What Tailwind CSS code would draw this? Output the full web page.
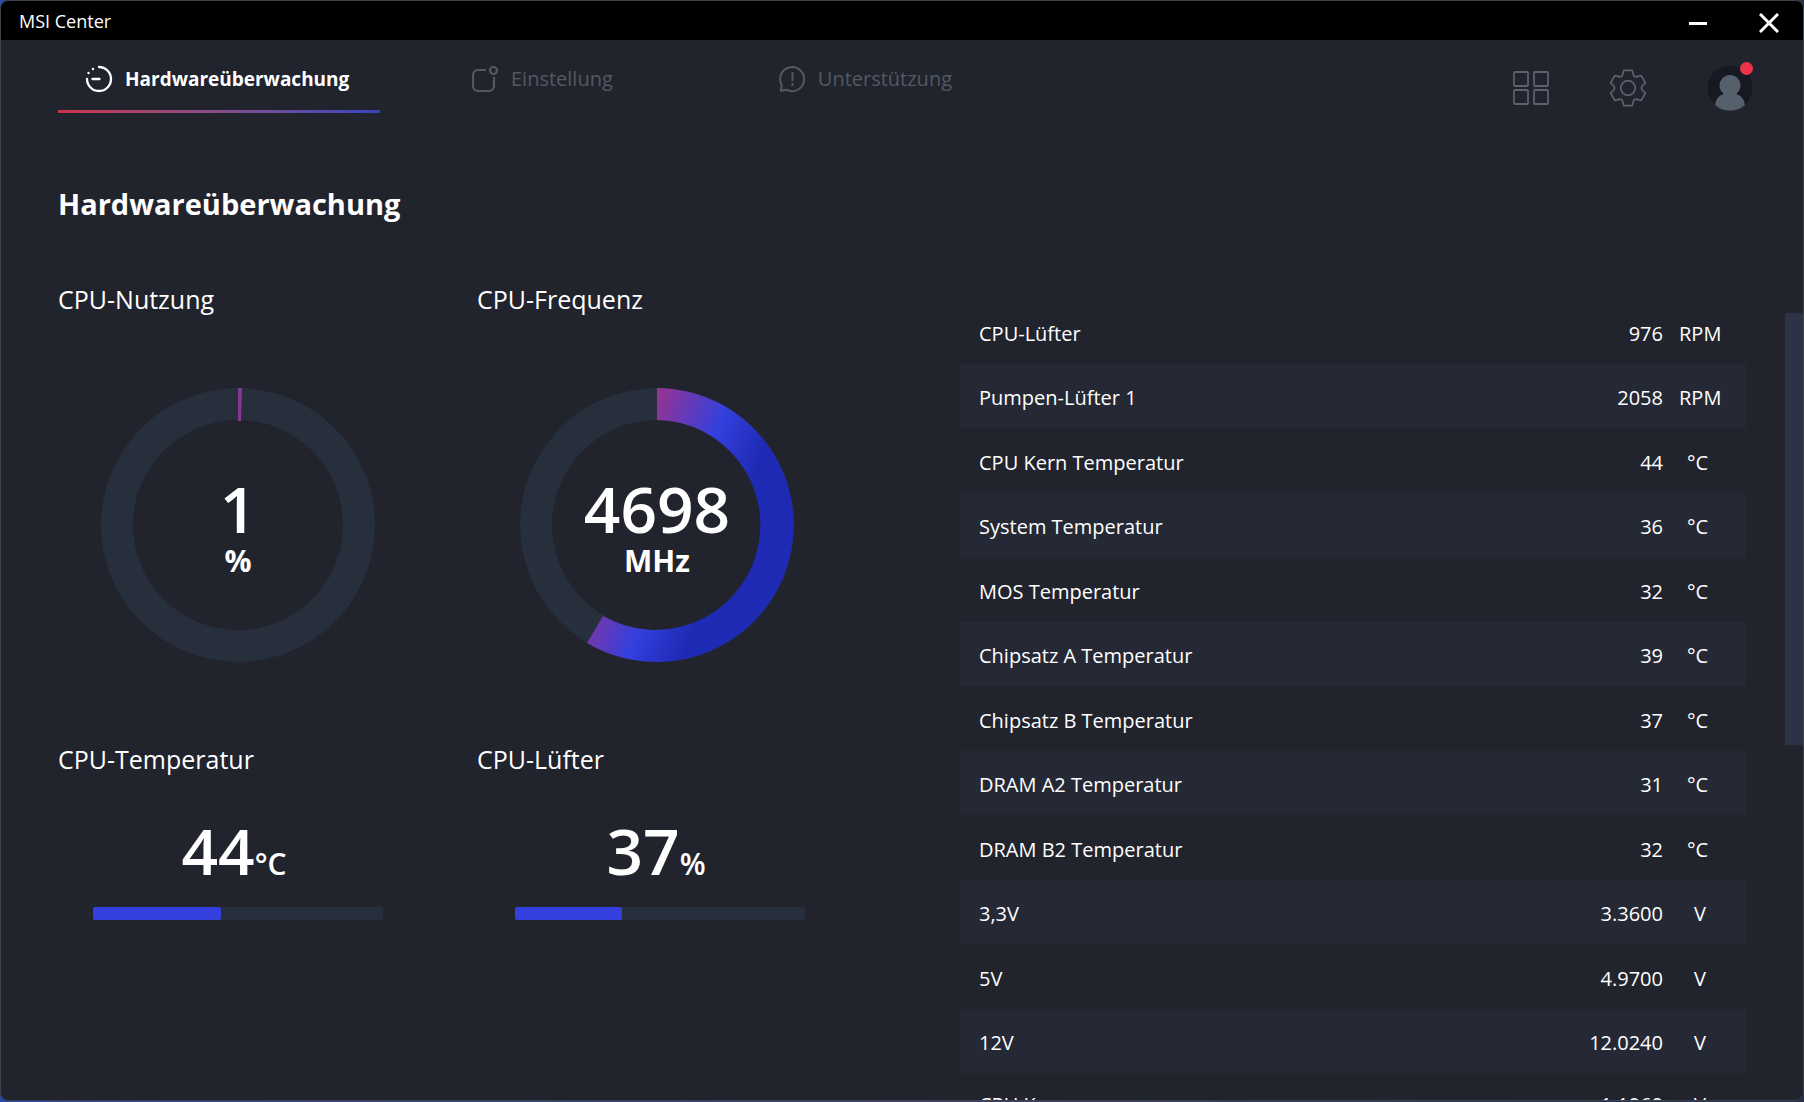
<!DOCTYPE html>
<html lang="de">
<head>
  <meta charset="UTF-8">
  <meta name="viewport" content="width=device-width, initial-scale=1.0">
  <title>MSI Center</title>
  <script src="https://cdn.jsdelivr.net/npm/@tailwindcss/browser@4"></script>
</head>
<body class="h-screen overflow-hidden bg-linear-to-r from-[#2c49a8] via-[#3f3f6d] to-[#262e48] pb-px font-['Open_Sans','Noto_Sans',sans-serif] text-white">
  <div class="flex h-full flex-col overflow-hidden rounded-lg border border-[#3a424c] bg-[#21242d]">

    <!-- Title bar -->
    <header class="flex h-[39px] shrink-0 items-center justify-between bg-black pr-6 pl-[18px]">
      <span class="text-lg">MSI Center</span>
      <div class="flex items-center gap-[50px] pt-1">
        <button type="button" aria-label="Minimieren">
          <svg class="h-5 w-5" viewBox="0 0 20 20" stroke="currentColor" stroke-width="3"><path d="M0 10.500h18"/></svg>
        </button>
        <button type="button" aria-label="Schließen">
          <svg class="h-5 w-5" viewBox="0 0 20 20" stroke="currentColor" stroke-width="3"><path d="M1 1l18 18M19 1L1 19"/></svg>
        </button>
      </div>
    </header>

    <!-- Navigation -->
    <div class="flex shrink-0 justify-between pr-[50px] pl-[57px]">
      <nav class="flex h-[73px] text-xl text-[#535963]">
        <a href="#" class="relative flex w-[322px] justify-start gap-3 pt-[25px] pl-[27px] text-[19px] leading-7 font-bold text-white">
          <svg class="h-7 w-7" viewBox="0 0 28 28" fill="none" stroke="currentColor" stroke-width="2.300" stroke-linecap="round">
            <path d="M14 2a12 12 0 1 1-12 12M7.500 14h7"/>
            <g fill="currentColor" stroke="none"><circle cx="3.500" cy="8" r="1.200"/><circle cx="8" cy="4" r="1.200"/></g>
          </svg>
          Hardwareüberwachung
          <span class="absolute inset-x-0 bottom-0 h-[3px] bg-linear-to-r from-[#cd3149] to-[#3543c0]"></span>
        </a>
        <a href="#" class="ml-[91px] flex gap-3 pt-[25px] leading-7">
          <svg class="h-7 w-7" viewBox="0 0 28 28" fill="none" stroke="currentColor" stroke-width="2.200">
            <path d="M15 5H7a5 5 0 0 0-5 5v11a5 5 0 0 0 5 5h11a5 5 0 0 0 5-5v-9"/><circle cx="22.500" cy="5.500" r="3.500"/>
          </svg>
          Einstellung
        </a>
        <a href="#" class="ml-[165px] flex gap-3 pt-[25px] leading-7">
          <svg class="h-7 w-7" viewBox="0 0 28 28" fill="none" stroke="currentColor" stroke-width="2">
            <path d="M3.800 20.200A12 12 0 1 1 8.500 24.700L2.800 25.800z" stroke-linejoin="round"/><path d="M14.500 7v9M14.500 18v3"/>
          </svg>
          Unterstützung
        </a>
      </nav>
      <div class="flex items-center gap-[60px] pt-[22px] text-[#5b626d]">
        <button type="button" aria-label="Apps">
          <svg class="h-9 w-9" viewBox="0 0 36 36" fill="none" stroke="currentColor" stroke-width="1.800">
            <rect x="1" y="2" width="14" height="14" rx="1"/><rect x="21" y="2" width="14" height="14" rx="1"/>
            <rect x="1" y="20" width="14" height="14" rx="1"/><rect x="21" y="20" width="14" height="14" rx="1"/>
          </svg>
        </button>
        <button type="button" aria-label="Einstellungen">
          <svg class="h-[38px] w-[38px]" viewBox="0 0 40 40" fill="none" stroke="currentColor" stroke-width="1.800" stroke-linejoin="round">
            <path d="M14 7L15.500 1.500H24.500L26 7L28.300 8.300L33.800 6.900L38.300 14.600L34.300 18.700V21.300L38.300 25.400L33.800 33.100L28.300 31.700L26 33L24.500 38.500H15.500L14 33L11.700 31.700L6.200 33.100L1.700 25.400L5.700 21.300V18.700L1.700 14.600L6.200 6.900L11.700 8.300z"/>
            <circle cx="20" cy="20" r="7.700"/>
          </svg>
        </button>
        <button type="button" aria-label="Benutzerkonto" class="relative">
          <svg class="h-[46px] w-[46px]" viewBox="0 0 46 46">
            <circle cx="23" cy="23" r="22.500" fill="#161922"/>
            <path fill="#56606c" d="M8 40c1-7 5-10 9-11a10.500 10.500 0 1 1 12 0c4 1 8 4 9 11a22.500 22.500 0 0 1-30 0z"/>
          </svg>
          <span class="absolute -top-[3px] right-0 h-[13px] w-[13px] rounded-full bg-[#ee3149]"></span>
        </button>
      </div>
    </div>

    <!-- Content -->
    <main class="flex min-h-0 flex-1">
      <section class="w-[902px] shrink-0 pt-[71px] pl-[57px]">
        <h1 class="text-[29px] leading-10 font-bold">Hardwareüberwachung</h1>

        <div class="grid w-[838px] grid-cols-2 pt-[59px]">
          <div class="h-[460px]">
            <h2 class="text-[25px] leading-8">CPU-Nutzung</h2>
            <div class="mt-[73px] ml-[43px] grid h-[274px] w-[274px] place-items-center rounded-full bg-[#272e3c]">
              <svg class="col-start-1 row-start-1 h-full w-full" viewBox="0 0 274 274">
                <circle cx="137" cy="137" r="105" fill="#21242d"/>
                <path d="M137 0h4l-1 33h-3z" fill="#853795"/>
              </svg>
              <div class="col-start-1 row-start-1 pt-2 text-center font-semibold">
                <p class="text-[64px] leading-[64px]">1</p>
                <p class="text-3xl leading-10 font-bold">%</p>
              </div>
            </div>
          </div>

          <div class="h-[460px]">
            <h2 class="text-[25px] leading-8">CPU-Frequenz</h2>
            <div class="mt-[73px] ml-[43px] grid h-[274px] w-[274px] place-items-center rounded-full bg-[#272e3c]">
              <svg class="col-start-1 row-start-1 h-full w-full" viewBox="0 0 274 274">
                <defs>
                  <linearGradient id="freq" gradientUnits="userSpaceOnUse" x1="120" y1="47" x2="232" y2="91">
                    <stop offset="0" stop-color="#983391"/>
                    <stop offset=".58" stop-color="#3340de"/>
                    <stop offset="1" stop-color="#1f2ab4"/>
                  </linearGradient>
                </defs>
                <circle cx="137" cy="137" r="105" fill="#21242d"/>
                <path d="M137 0a137 137 0 1 1-70 255l16-27a105 105 0 1 0 54-196z" fill="url(#freq)"/>
              </svg>
              <div class="col-start-1 row-start-1 pt-2 text-center font-semibold">
                <p class="text-[64px] leading-[64px]">4698</p>
                <p class="text-3xl leading-10 font-bold">MHz</p>
              </div>
            </div>
          </div>

          <div>
            <h2 class="text-[25px] leading-8">CPU-Temperatur</h2>
            <div class="mt-9 ml-[35px] w-[290px]">
              <p class="pr-2 text-center text-[64px] leading-[80px] font-semibold">44<span class="text-3xl">°C</span></p>
              <div class="mt-4 h-[13px] rounded-xs bg-[#272e3c]"><div class="h-full rounded-xs bg-[#3340de]" style="width: 44%"></div></div>
            </div>
          </div>

          <div>
            <h2 class="text-[25px] leading-8">CPU-Lüfter</h2>
            <div class="mt-9 ml-[38px] w-[290px]">
              <p class="pr-2 text-center text-[64px] leading-[80px] font-semibold">37<span class="text-3xl">%</span></p>
              <div class="mt-4 h-[13px] rounded-xs bg-[#272e3c]"><div class="h-full rounded-xs bg-[#3340de]" style="width: 37%"></div></div>
            </div>
          </div>
        </div>
      </section>

      <!-- Sensor list -->
      <section class="flex min-w-0 flex-1 gap-[39px] overflow-hidden pt-[186px] pl-[57px]">
        <table class="flex-1 table-fixed self-start text-xl">
          <tbody id="sensors"></tbody>
        </table>
        <div class="mt-[14px] h-[432px] w-[18px] shrink-0 rounded-tl-xs bg-[#2d3346]"></div>
      </section>
    </main>
  </div>

  <script>
    const sensors = [
      ['CPU-Lüfter', '976', 'RPM'],
      ['Pumpen-Lüfter 1', '2058', 'RPM'],
      ['CPU Kern Temperatur', '44', '°C'],
      ['System Temperatur', '36', '°C'],
      ['MOS Temperatur', '32', '°C'],
      ['Chipsatz A Temperatur', '39', '°C'],
      ['Chipsatz B Temperatur', '37', '°C'],
      ['DRAM A2 Temperatur', '31', '°C'],
      ['DRAM B2 Temperatur', '32', '°C'],
      ['3,3V', '3.3600', 'V'],
      ['5V', '4.9700', 'V'],
      ['12V', '12.0240', 'V'],
      ['CPU Kern', '1.1960', 'V'],
    ];

    const unitPadding = { 'RPM': 'pl-4', '°C': 'pl-6', 'V': 'pl-[31px]' };

    document.getElementById('sensors').innerHTML = sensors.map(([name, value, unit]) => `
      <tr class="h-[65px] last:h-[60px] even:h-16 even:bg-[#252935]">
        <th scope="row" class="pt-1 pl-[19px] text-left font-normal">${name}</th>
        <td class="w-40 pt-1 text-right">${value}</td>
        <td class="w-[83px] pt-1 ${unitPadding[unit]}">${unit}</td>
      </tr>
    `).join('');
  </script>
</body>
</html>
